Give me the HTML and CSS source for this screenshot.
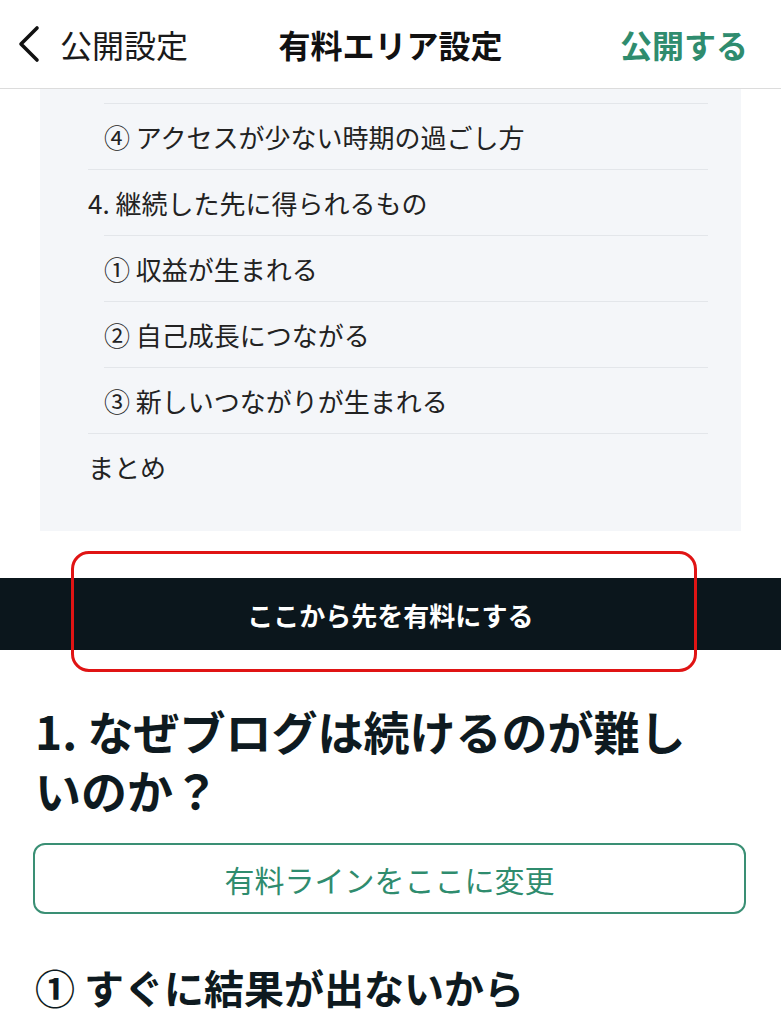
FILE: index.html
```html
<!DOCTYPE html>
<html lang="ja">
  <head>
    <meta charset="UTF-8" />
    <meta name="viewport" content="width=device-width, initial-scale=1.0" />
    <title>有料エリア設定</title>
    <link rel="stylesheet" href="styles.css">
  </head>

  <body>
    <!-- Top bar -->
    <header class="topbar">
      <a class="back" href="#">
        <svg class="back-icon" width="26" height="38" viewBox="0 0 26 38">
          <path d="M21 3 L5 19 L21 35" fill="none" stroke="#111" stroke-width="3.6" stroke-linecap="round" stroke-linejoin="round" />
        </svg>
        <span>公開設定</span>
      </a>
      <h1 class="title">有料エリア設定</h1>
      <a class="publish" href="#">公開する</a>
    </header>

    <!-- Table of contents -->
    <section class="toc">
      <ul>
        <li class="sub">④ アクセスが少ない時期の過ごし方</li>
        <li>4. 継続した先に得られるもの</li>
        <li class="sub">① 収益が生まれる</li>
        <li class="sub">② 自己成長につながる</li>
        <li class="sub">③ 新しいつながりが生まれる</li>
        <li class="last">まとめ</li>
      </ul>
    </section>

    <!-- Paid line -->
    <div class="paid-line">
      <span>ここから先を有料にする</span>
      <div class="highlight"></div>
    </div>

    <article class="body">
      <h2 class="heading">1. なぜブログは続けるのが難しいのか？</h2>
      <button class="move-line">有料ラインをここに変更</button>
      <h3 class="subheading">① すぐに結果が出ないから</h3>
    </article>
  </body>
</html>
```

FILE: styles.css
```css
/* Base */
body {
  font-family: "Noto Sans CJK JP", "Noto Sans", sans-serif;
  background-color: #fff;
  color: #0e1a20;
  margin: 0;
  padding: 0;
}

/* Top bar */
.topbar {
  height: 88px;
  display: grid;
  grid-template-columns: 1fr auto 1fr;
  align-items: center;
  padding: 0 33px;
  border-bottom: 1px solid #dcdcdc;
}

.back {
  display: flex;
  align-items: center;
  gap: 18px;
  margin-left: -17px;
  color: #1a1a1a;
  text-decoration: none;
  font-size: 32px;
}

.back-icon {
  display: block;
}

.title {
  margin: 0;
  font-size: 32px;
  font-weight: bold;
  color: #111;
}

.publish {
  justify-self: end;
  color: #2f8c6e;
  text-decoration: none;
  font-size: 32px;
  font-weight: bold;
}

/* Table of contents */
.toc {
  background-color: #f4f6f9;
  margin: 0 40px;
  padding: 14px 33px 32px 48px;
}

.toc ul {
  list-style: none;
  margin: 0;
  padding: 0;
}

.toc li {
  height: 65px;
  line-height: 65px;
  border-top: 1px solid #e3e6ea;
  font-size: 26px;
  color: #222;
}

.toc li.sub {
  margin-left: 16px;
}

/* Paid area line */
.paid-line {
  position: relative;
  margin-top: 47px;
  height: 72px;
  background-color: #0b161c;
  color: #fff;
  display: flex;
  align-items: center;
  justify-content: center;
  font-size: 26px;
  font-weight: bold;
}

.highlight {
  position: absolute;
  left: 71px;
  top: -27px;
  width: 620px;
  height: 115px;
  border: 3px solid #e01414;
  border-radius: 18px;
}

/* Article body */
.body {
  padding: 51px 46px 0 35px;
}

.heading {
  margin: 0;
  max-width: 690px;
  font-size: 46px;
  line-height: 59px;
  font-weight: bold;
  color: #0e1a20;
}

.move-line {
  display: block;
  width: calc(100% + 13px);
  height: 71px;
  margin: 24px 0 0 -2px;
  background-color: #fff;
  border: 2px solid #3a8f74;
  border-radius: 12px;
  color: #2f8c6e;
  font-family: inherit;
  font-size: 30px;
  cursor: pointer;
}

.subheading {
  margin: 46px 0 0;
  font-size: 40px;
  line-height: 54px;
  font-weight: bold;
  color: #0e1a20;
}
```
